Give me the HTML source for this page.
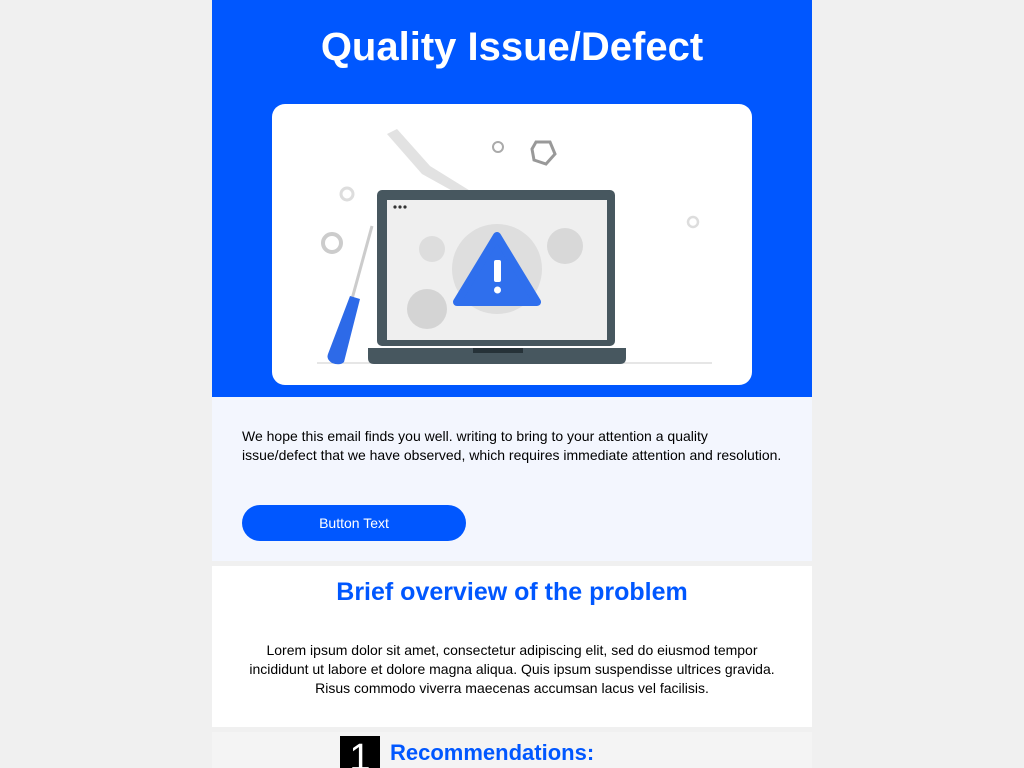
<!DOCTYPE html>
<html><head><meta charset="utf-8"><style>
body{margin:0;background:#f0f0f0;font-family:"Liberation Sans",sans-serif;}
.w{position:absolute;left:212px;width:600px;}
</style></head><body>
<div class="w" style="top:0;height:397px;background:#0057ff;">
  <div style="position:absolute;top:25px;width:100%;text-align:center;color:#fff;font-size:40px;font-weight:bold;">Quality Issue/Defect</div>
  <div style="position:absolute;left:60px;top:104px;width:480px;height:281px;background:#fff;border-radius:13px;overflow:hidden;">
    <svg width="480" height="281" viewBox="0 0 480 281">
      <line x1="45" y1="259" x2="440" y2="259" stroke="#ddd" stroke-width="1.5"/>
      <path d="M115 30 L150 70 L195 95 L200 88 L158 62 L125 25Z" fill="#e2e2e2"/>
      <circle cx="226" cy="43" r="5" fill="none" stroke="#aaa" stroke-width="2"/>
      <polygon points="264,38 278,38 283,50 274,60 262,56 260,45" fill="none" stroke="#999" stroke-width="3"/>
      <circle cx="75" cy="90" r="6" fill="none" stroke="#ddd" stroke-width="3"/>
      <circle cx="60" cy="139" r="9" fill="none" stroke="#ccc" stroke-width="4"/>
      <circle cx="421" cy="118" r="5" fill="none" stroke="#ddd" stroke-width="2.5"/>
      <rect x="105" y="86" width="238" height="156" rx="5" fill="#47575f"/>
      <rect x="115" y="96" width="220" height="140" fill="#efefef"/>
      <circle cx="123" cy="103" r="1.6" fill="#333"/><circle cx="128" cy="103" r="1.6" fill="#333"/><circle cx="133" cy="103" r="1.6" fill="#333"/>
      <circle cx="225" cy="165" r="45" fill="#dedede"/><circle cx="160" cy="145" r="13" fill="#ddd"/><circle cx="293" cy="142" r="18" fill="#d8d8d8"/><circle cx="155" cy="205" r="20" fill="#d4d4d4"/>
      <path d="M225 132 L265 198 L185 198Z" fill="#2f6fed" stroke="#2f6fed" stroke-width="8" stroke-linejoin="round"/>
      <rect x="222" y="156" width="7" height="22" rx="2" fill="#fff"/><circle cx="225.5" cy="186" r="3.5" fill="#fff"/>
      <path d="M96 244 H354 V254 Q354 260 348 260 H102 Q96 260 96 254Z" fill="#47575f"/>
      <rect x="201" y="244" width="50" height="5" fill="#263238"/>
      <line x1="100" y1="122" x2="80" y2="195" stroke="#ccc" stroke-width="3"/>
      <path d="M78 192 L88 195 L72 258 Q68 262 60 259 Q54 255 56 250Z" fill="#2d6ae8"/>
    </svg>
  </div>
</div>
<div class="w" style="top:397px;height:164px;background:#f3f6fe;">
  <div style="position:absolute;left:30px;top:30px;width:542px;font-size:14px;line-height:19px;color:#000;">We hope this email finds you well. writing to bring to your attention a quality issue/defect that we have observed, which requires immediate attention and resolution.</div>
  <div style="position:absolute;left:30px;top:108px;width:224px;height:36px;border-radius:18px;background:#0057ff;color:#fff;font-size:14px;line-height:36px;text-align:center;">Button Text</div>
</div>
<div class="w" style="top:566px;height:161px;background:#fff;">
  <div style="position:absolute;top:12px;width:100%;text-align:center;color:#0057ff;font-size:25px;font-weight:bold;">Brief overview of the problem</div>
  <div style="position:absolute;left:30px;top:75px;width:540px;text-align:center;font-size:14px;line-height:19px;color:#000;">Lorem ipsum dolor sit amet, consectetur adipiscing elit, sed do eiusmod tempor incididunt ut labore et dolore magna aliqua. Quis ipsum suspendisse ultrices gravida. Risus commodo viverra maecenas accumsan lacus vel facilisis.</div>
</div>
<div class="w" style="top:732px;height:36px;background:#f4f4f4;overflow:hidden;">
  <div style="position:absolute;left:128px;top:4px;width:40px;height:40px;background:#000;color:#fff;font-size:38px;text-align:center;line-height:44px;">1</div>
  <div style="position:absolute;left:178px;top:8px;color:#0057ff;font-size:22px;font-weight:bold;">Recommendations:</div>
</div>
</body></html>
